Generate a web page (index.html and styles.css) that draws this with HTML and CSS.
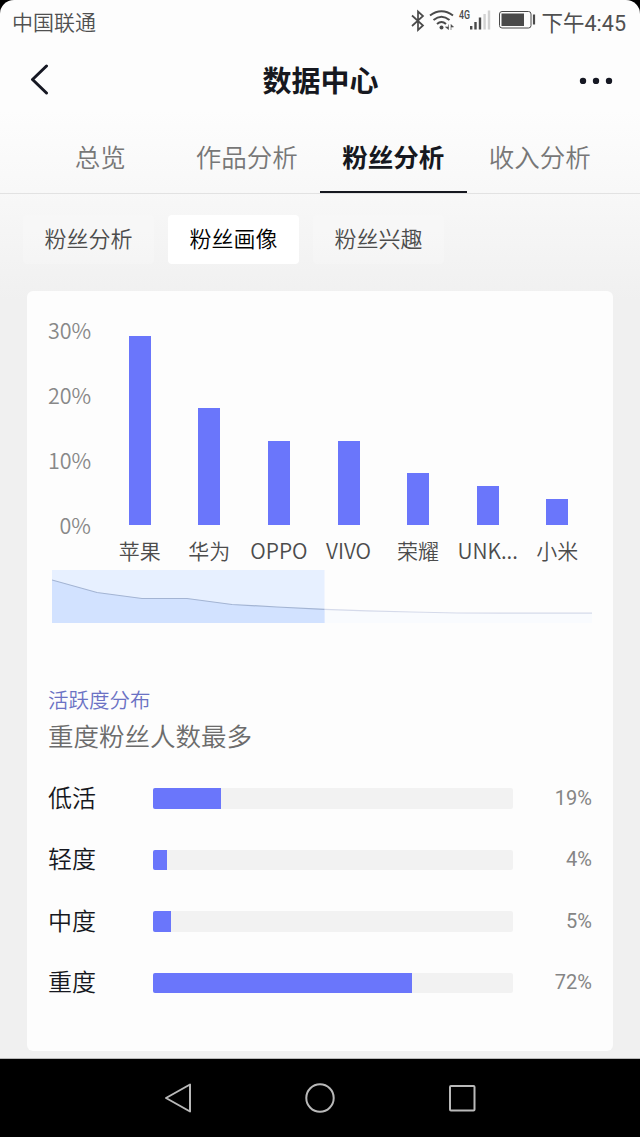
FILE: index.html
```html
<!DOCTYPE html>
<html lang="zh-CN">
<head>
    <meta charset="UTF-8">
    <meta name="viewport" content="width=device-width, initial-scale=1.0">
    <title>数据中心</title>
    <link rel="stylesheet" href="styles.css">
</head>
<body>
    <div class="screen">
        <div class="status-bar">
            <span class="carrier">中国联通</span>
            <svg class="status-icons" width="128" height="24" viewBox="0 0 128 24" fill="none" stroke="#4a4a4a">
                <!-- bluetooth -->
                <path d="M2 6.500 L13 16.500 L8 21 V2.500 L13 7 L2 17" stroke-width="1.700"/>
                <!-- wifi -->
                <path d="M20 6.500 Q31.500 -2 43 6.500" stroke-width="2"/>
                <path d="M23.500 11 Q31.500 4.500 39.500 11" stroke-width="2"/>
                <path d="M27 15 Q31.500 11 36 15" stroke-width="2"/>
                <circle cx="31.500" cy="18.500" r="2" fill="#4a4a4a" stroke="none"/>
                <path d="M38.500 15.500 V20.500 L35.500 18 H38.500 M41 21 V15.500 L43.500 18 H41" fill="#4a4a4a" stroke-width="0.600"/>
                <text x="49" y="10" class="network" textLength="11" lengthAdjust="spacingAndGlyphs">4G</text>
                <!-- signal -->
                <path d="M61.200 17 V20.500 M65.500 13 V20.500 M70 8.500 V20.500" stroke-width="2.400"/>
                <path d="M74.600 5 V20.500 M79 1.500 V20.500" stroke="#d2d2d2" stroke-width="2.400"/>
                <!-- battery -->
                <rect x="89.500" y="2.500" width="31.500" height="16.500" rx="2.500" stroke-width="1"/>
                <rect x="91.500" y="4.500" width="22.500" height="12.500" fill="#4a4a4a" stroke="none"/>
                <path d="M124 5.500 V15.500" stroke-width="2.200"/>
            </svg>
            <span class="clock">下午4:45</span>
        </div>

        <header class="title-bar">
            <svg width="32" height="32" viewBox="0 0 32 32" fill="none" stroke="#161823" stroke-width="3" stroke-linecap="round" stroke-linejoin="round">
                <path d="M16.500 2 L2.500 15.500 L16.500 29"/>
            </svg>
            <h1>数据中心</h1>
            <svg width="34" height="8" viewBox="0 0 34 8" fill="#161823">
                <circle cx="4" cy="5" r="3.200"/>
                <circle cx="17" cy="5" r="3.200"/>
                <circle cx="30" cy="5" r="3.200"/>
            </svg>
        </header>

        <nav class="tabs">
            <a class="tab">总览</a>
            <a class="tab">作品分析</a>
            <a class="tab active">粉丝分析</a>
            <a class="tab">收入分析</a>
        </nav>

        <div class="pills">
            <a class="pill">粉丝分析</a>
            <a class="pill active">粉丝画像</a>
            <a class="pill">粉丝兴趣</a>
        </div>

        <main class="card">
            <div class="chart">
                <div class="y-axis">
                    <span>30%</span>
                    <span>20%</span>
                    <span>10%</span>
                    <span>0%</span>
                </div>
                <div class="columns">
                    <div class="column"><div class="bar" style="height: 189px"></div><span>苹果</span></div>
                    <div class="column"><div class="bar" style="height: 117px"></div><span>华为</span></div>
                    <div class="column"><div class="bar" style="height: 84.500px"></div><span>OPPO</span></div>
                    <div class="column"><div class="bar" style="height: 84.500px"></div><span>VIVO</span></div>
                    <div class="column"><div class="bar" style="height: 52px"></div><span>荣耀</span></div>
                    <div class="column"><div class="bar" style="height: 39px"></div><span>UNK...</span></div>
                    <div class="column"><div class="bar" style="height: 26px"></div><span>小米</span></div>
                </div>
            </div>

            <svg class="zoom-slider" width="540" height="53" viewBox="0 0 540 53">
                <path d="M0 10 L45 22.500 L90 28.500 H135 L180 34.500 L225 37 L270 39.300 L315 40.800 L360 42 L405 43 L450 43.200 H540 V53 H0 Z" fill="#f9fbfe"/>
                <rect width="272.500" height="53" fill="#e7f0ff"/>
                <path d="M0 10 L45 22.500 L90 28.500 H135 L180 34.500 L225 37 L272.500 39.300 V53 H0 Z" fill="#d2e2ff"/>
                <path d="M272.500 39.300 L315 40.800 L360 42 L405 43 L450 43.200 H540" fill="none" stroke="#d5daea" stroke-width="1.200"/>
                <path d="M0 10 L45 22.500 L90 28.500 H135 L180 34.500 L225 37 L272.500 39.300" fill="none" stroke="#a3b4d3" stroke-width="1.200"/>
            </svg>

            <h2>活跃度分布</h2>
            <p class="summary">重度粉丝人数最多</p>

            <div class="row">
                <span class="label">低活</span>
                <div class="track"><div class="fill" style="width: 19%"></div></div>
                <span class="value">19%</span>
            </div>
            <div class="row">
                <span class="label">轻度</span>
                <div class="track"><div class="fill" style="width: 4%"></div></div>
                <span class="value">4%</span>
            </div>
            <div class="row">
                <span class="label">中度</span>
                <div class="track"><div class="fill" style="width: 5%"></div></div>
                <span class="value">5%</span>
            </div>
            <div class="row">
                <span class="label">重度</span>
                <div class="track"><div class="fill" style="width: 72%"></div></div>
                <span class="value">72%</span>
            </div>
        </main>
    </div>

    <footer class="nav-bar">
        <svg width="30" height="32" viewBox="0 0 30 32" fill="none" stroke="#b9b9b9" stroke-width="2" stroke-linejoin="round">
            <path d="M27 2.500 V29.500 L3 16 Z"/>
        </svg>
        <svg width="30" height="32" viewBox="0 0 30 32" fill="none" stroke="#b9b9b9" stroke-width="2">
            <circle cx="15" cy="16" r="13.700"/>
        </svg>
        <svg width="30" height="32" viewBox="0 0 30 32" fill="none" stroke="#b9b9b9" stroke-width="2">
            <rect x="3" y="4" width="24.500" height="24.500" rx="1"/>
        </svg>
    </footer>
</body>
</html>
```
FILE: styles.css
```css
* {
    box-sizing: border-box;
}
body {
    margin: 0;
    height: 1137px;
    overflow: hidden;
    background-color: #000;
    font-family: "Noto Sans CJK SC", sans-serif;
    font-weight: 350;
    color: #161820;
}
.screen {
    height: 1059px;
    border-radius: 14px 14px 0 0;
    border-bottom: 1px solid #b8b8b8;
    background: linear-gradient(#fdfdfd 0, #fdfdfd 110px, #f8f8f8 190px, #f0f0f0 300px);
}
.status-bar {
    display: flex;
    align-items: center;
    height: 42px;
    padding: 0 14px 0 12px;
    color: #505050;
    font-size: 21px;
}
.carrier {
    margin-right: auto;
}
.status-icons {
    margin-right: 4px;
}
.network {
    fill: #4a4a4a;
    stroke: none;
    font: 500 12px Roboto, sans-serif;
}
.clock {
    font-family: Roboto, "Noto Sans CJK SC", sans-serif;
    font-size: 21.5px;
    font-weight: 400;
}
.title-bar {
    display: flex;
    align-items: center;
    justify-content: space-between;
    height: 76px;
    padding: 0 27px 0 30px;
}
.title-bar h1 {
    margin: 0 0 2px;
    font-size: 29px;
    line-height: 40px;
    font-weight: 700;
}
.tabs {
    display: flex;
    height: 76px;
    padding: 0 27px;
    border-bottom: 1px solid #e2e2e2;
}
.tab {
    flex: 1;
    height: 75px;
    border-bottom: 2px solid transparent;
    line-height: 76px;
    text-align: center;
    font-size: 25.5px;
    color: #777;
}
.tab.active {
    border-color: #161820;
    font-weight: 700;
    color: #161820;
}
.pills {
    display: flex;
    gap: 14px;
    padding: 21px 24px 27px 23px;
}
.pill {
    width: 131px;
    height: 49px;
    border-radius: 4px;
    background-color: rgba(255, 255, 255, 0.2);
    line-height: 45px;
    text-align: center;
    font-size: 22px;
    color: #4c4c4c;
}
.pill.active {
    background-color: #fff;
    color: #000;
}
.card {
    height: 760px;
    margin: 0 27px;
    padding: 24px 21px 0;
    border-radius: 6px;
    background-color: #fdfdfd;
}
.chart {
    display: flex;
    height: 255px;
}
.y-axis {
    width: 43px;
    margin-right: 14px;
    text-align: right;
    font-size: 21.5px;
    color: #888;
}
.y-axis span {
    display: block;
    height: 65px;
    line-height: 29px;
}
.columns {
    flex: 1;
    display: flex;
}
.column {
    flex: 1;
    min-width: 0;
    height: 255px;
    display: flex;
    flex-direction: column;
    align-items: center;
    justify-content: flex-end;
}
.column span {
    height: 45px;
    line-height: 50px;
    font-size: 21px;
    white-space: nowrap;
    color: #4c4c4c;
}
.bar {
    width: 22px;
    background-color: #6a76fb;
}
.zoom-slider {
    display: block;
    margin-left: 4px;
}
.card h2 {
    margin: 61px 0 0;
    font-size: 20.5px;
    line-height: 31px;
    font-weight: 350;
    color: #6b72c4;
}
.summary {
    margin: 1px 0 14px;
    font-size: 25.5px;
    line-height: 37px;
    color: #6c6c6c;
}
.row {
    display: flex;
    align-items: center;
    height: 61.5px;
}
.row:first-of-type {
    margin-top: 1px;
}
.label {
    width: 105px;
    font-size: 24px;
    line-height: 32px;
    padding-bottom: 2px;
}
.track {
    width: 360px;
    height: 20.5px;
    margin-top: 1px;
    border-radius: 2px;
    overflow: hidden;
    background-color: #f2f2f2;
}
.fill {
    height: 100%;
    background-color: #6a76fb;
}
.value {
    flex: 1;
    text-align: right;
    font-family: Roboto, sans-serif;
    font-size: 20px;
    font-weight: 400;
    color: #858585;
}
.nav-bar {
    display: flex;
    justify-content: center;
    gap: 112px;
    height: 78px;
    padding-top: 23px;
}
```
